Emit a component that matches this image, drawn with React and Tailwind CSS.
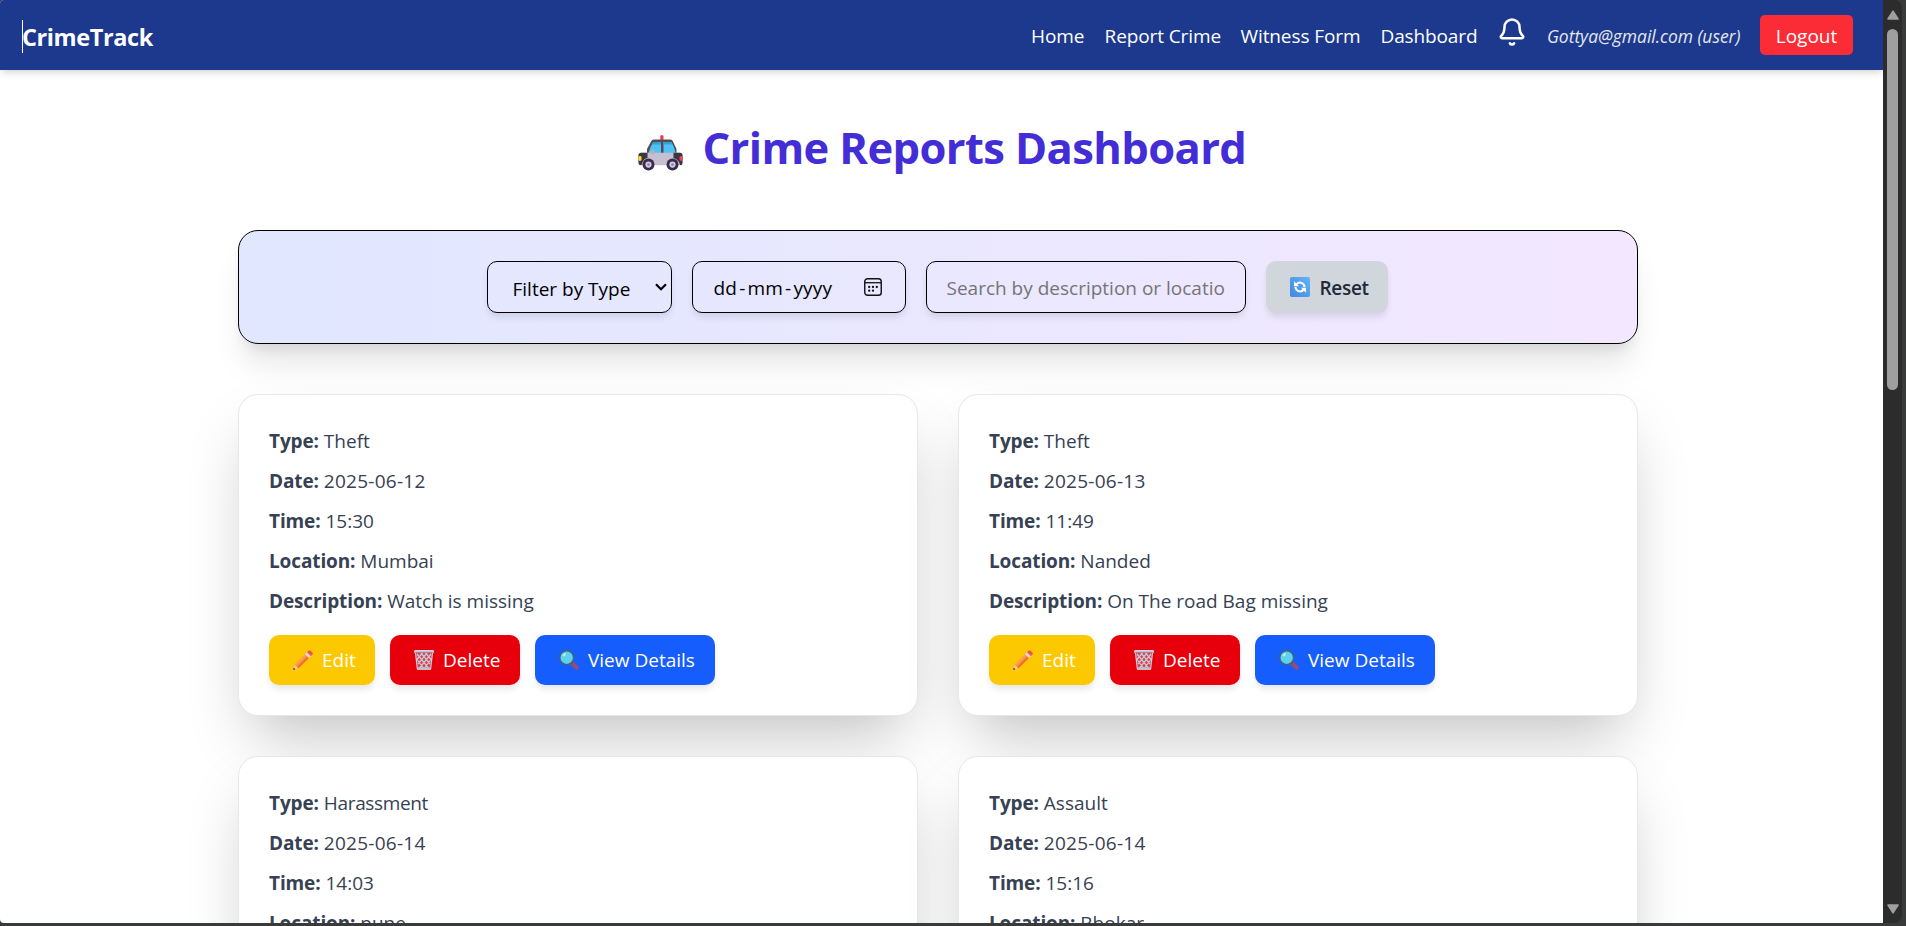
import React from "react";
import { Bell } from "lucide-react";

const reports = [
  { type: "Theft", date: "2025-06-12", time: "15:30", location: "Mumbai", description: "Watch is missing" },
  { type: "Theft", date: "2025-06-13", time: "11:49", location: "Nanded", description: "On The road Bag missing" },
  { type: "Harassment", date: "2025-06-14", time: "14:03", location: "pune", description: "Harassment at station" },
  { type: "Assault", date: "2025-06-14", time: "15:16", location: "Bhokar", description: "Assault near market" },
];

function PoliceCar() {
  return (
    <svg viewBox="0 0 45 36" className="mt-[5px] h-[36px] w-[45px] shrink-0" aria-hidden="true">
      <rect x="22.300" y="0" width="3.200" height="5.500" rx="1.600" fill="#f8314f" />
      <path d="M15.500 4.500h17q1.500 0 2.200 1.500L38.500 14V19H9V14L13.300 6q.7-1.500 2.200-1.500Z" fill="#504f56" />
      <path d="M15.300 7h7.700V18H10.500Q12 12 15.300 7Z" fill="#4fc3f5" />
      <path d="M25.500 7h7.800q3.200 5 4.400 11H25.500Z" fill="#4fc3f5" />
      <path d="M15.300 7h7.700v2.500h-9ZM25.500 7h7.800l1.300 2.500h-9.100Z" fill="#3a9fcf" />
      <path d="M3 17.800h39q2.500 0 2.500 2.500v7.500q0 2.500-2.500 2.500H3Q.5 30.300.5 27.800V20.300q0-2.500 2.500-2.500Z" fill="#c5bfd0" />
      <path d="M9.500 17.800V23q-5 1-6 7.300Q.5 30.300.5 27.800V20.300q0-2.500 2.500-2.500ZM35.500 17.800H42q2.500 0 2.500 2.500v7.500q0 2.500-2.500 2.500-1-6-6.500-7.300Z" fill="#3a3740" />
      <rect x=".5" y="21" width="3" height="5" rx="1.400" fill="#fdd835" />
      <rect x="41.500" y="21" width="3" height="5" rx="1.400" fill="#f83b5a" />
      <rect x="12.800" y="14.500" width="3.800" height="4.800" rx="1.700" fill="#b5aec0" />
      <circle cx="10.500" cy="29.600" r="6" fill="#3b2b4f" />
      <circle cx="10.500" cy="29.600" r="3.100" fill="#d2cbe0" />
      <circle cx="10.500" cy="29.600" r="1.300" fill="#8d82a0" />
      <circle cx="34.500" cy="29.600" r="6" fill="#3b2b4f" />
      <circle cx="34.500" cy="29.600" r="3.100" fill="#d2cbe0" />
      <circle cx="34.500" cy="29.600" r="1.300" fill="#8d82a0" />
    </svg>
  );
}

function RefreshIcon() {
  return (
    <svg viewBox="0 0 20 20" className="h-5 w-5 shrink-0" aria-hidden="true">
      <defs>
        <linearGradient id="refresh-bg" x1="1" y1="0" x2="0" y2="1">
          <stop offset="0" stopColor="#62b4fb" />
          <stop offset="1" stopColor="#3f86e0" />
        </linearGradient>
      </defs>
      <rect width="20" height="20" rx="1.800" fill="url(#refresh-bg)" />
      <g fill="none" stroke="#fff" strokeWidth="2">
        <path d="M6 7.800Q8.500 4.300 12 6.200 14.500 7.500 14.500 10" />
        <path d="M14 12.200Q11.500 15.700 8 13.800 5.500 12.500 5.500 10" />
      </g>
      <path d="M4 4.200V9.200H9ZM16 15.800V10.800H11Z" fill="#fff" />
    </svg>
  );
}

function PencilIcon() {
  return (
    <svg viewBox="0 0 20 20" className="h-5 w-5 shrink-0" aria-hidden="true">
      <path d="M0 20 1.700 14.500 5.500 18.300Z" fill="#f3c7a2" />
      <path d="M0 20 .8 17.500 2.500 19.200Z" fill="#503b5c" />
      <path d="M1.700 14.500 12 4.200 15.800 8 5.500 18.300Z" fill="#ff8b3d" />
      <path d="M1.700 14.500 12 4.200 13.300 5.500 3 15.800Z" fill="#ffa24f" />
      <path d="M4.300 17.100 14.600 6.800 15.800 8 5.500 18.300Z" fill="#ee6a34" />
      <path d="M12 4.200 14 2.200 17.800 6 15.800 8Z" fill="#ded5ee" />
      <path d="M14 2.200 15.500.7Q16.500-.2 17.600.7L19.300 2.400Q20.300 3.500 19.300 4.500L17.800 6Z" fill="#f4504e" />
    </svg>
  );
}

function TrashIcon() {
  return (
    <svg viewBox="0 0 20 20" className="h-5 w-5 shrink-0" aria-hidden="true">
      <path d="M1.200 2.500H18.800L16.800 18H3.200Z" fill="#b5a9bd" fillOpacity=".4" />
      <g fill="none" stroke="#cfc8d6" strokeWidth="1.200">
        <path d="M1.500 3 3.300 18.500M18.500 3 16.700 18.500M3 4 14.500 18M7 3 16 14M11.500 3 17.500 10M2.500 9 9.500 18M17 4 5.500 18M13 3 4 14M8.500 3 2.500 10M17.500 9 10.500 18" />
      </g>
      <rect x="0" y="0" width="20" height="3" rx="1.200" fill="#d5cedc" />
      <rect x="1.500" y="1.800" width="17" height="1.200" fill="#998da5" />
      <rect x="2.800" y="17.200" width="14.400" height="2.800" rx="1" fill="#c4bccb" />
    </svg>
  );
}

function MagnifierIcon() {
  return (
    <svg viewBox="0 0 20 20" className="h-5 w-5 shrink-0" aria-hidden="true">
      <path d="M13 13 17.700 17.700" stroke="#9c4a70" strokeWidth="4" strokeLinecap="round" />
      <path d="M11.500 11.500 13.500 13.500" stroke="#5c5470" strokeWidth="2.400" />
      <circle cx="7.700" cy="7.700" r="6.900" fill="#5fd0ee" stroke="#41657f" strokeWidth="1.400" />
      <ellipse cx="5.300" cy="4.800" rx="2" ry="1.200" transform="rotate(-40 5.300 4.800)" fill="#b4eefa" />
    </svg>
  );
}

function CalendarIcon() {
  return (
    <svg viewBox="0 0 18 18" className="h-[18px] w-[18px] shrink-0" aria-hidden="true">
      <rect x=".75" y=".75" width="16.500" height="16.500" rx="2.800" fill="none" stroke="#111" strokeWidth="1.400" />
      <path d="M1 4.700H17" stroke="#111" strokeWidth="1.300" />
      <g fill="#111">
        <circle cx="5.200" cy="9" r="1.150" />
        <circle cx="9" cy="9" r="1.150" />
        <circle cx="12.800" cy="9" r="1.150" />
        <circle cx="5.200" cy="12.700" r="1.150" />
        <circle cx="9" cy="12.700" r="1.150" />
      </g>
    </svg>
  );
}

function Navbar() {
  return (
    <nav className="relative flex h-[70px] shrink-0 items-center bg-[#1c398e] pr-[30px] pl-[22px] text-[19px] text-white shadow-[0_5px_7.5px_-1.25px_rgba(0,0,0,0.1),0_2.5px_5px_-2.5px_rgba(0,0,0,0.1)]">
      <div className="relative mt-[4px] text-[23.5px] leading-[33px] font-bold tracking-[-0.4px]">
        <span className="absolute top-[-1px] left-0 h-[33px] w-px bg-white" />
        CrimeTrack
      </div>
      <div className="ml-auto flex items-center whitespace-nowrap">
        <a className="mt-[2px] w-[73.5px] tracking-[-0.1px]">Home</a>
        <a className="mt-[2px] w-[136px] tracking-[-0.1px]">Report Crime</a>
        <a className="mt-[2px] w-[140px] tracking-[-0.1px]">Witness Form</a>
        <a className="mt-[2px] w-[116.5px] tracking-[-0.13px]">Dashboard</a>
        <Bell className="mt-[-7px] h-[30px] w-[30px]" strokeWidth={2} />
        <span className="mt-[3px] ml-[20px] w-[213px] text-[17.5px] tracking-[-0.04px] text-gray-200 italic">Gottya@gmail.com (user)</span>
        <button className="h-10 w-[93px] rounded-[5px] bg-[#fb2c36] pt-[2px]">Logout</button>
      </div>
    </nav>
  );
}

function Filters() {
  return (
    <section className="flex h-[114px] w-[1400px] items-center justify-center gap-5 rounded-[20px] border border-black bg-linear-to-r from-indigo-100 to-purple-100 pr-[2px] text-[19px] whitespace-nowrap shadow-[0_25px_31px_-6px_rgba(0,0,0,0.1),0_10px_12.5px_-7.5px_rgba(0,0,0,0.1)]">
      <div className="flex h-[52px] w-[185px] items-center justify-between rounded-[10px] border border-black pr-[4px] pl-[25px] shadow-[0_5px_7.5px_-1px_rgba(0,0,0,0.1)]">
        <span className="mt-[4px]">Filter by Type</span>
        <svg viewBox="0 0 12 8" className="h-2 w-3" fill="none" stroke="#000" strokeWidth="2.200">
          <path d="M1 1.200 6 6.300 11 1.200" />
        </svg>
      </div>
      <div className="flex h-[52px] w-[214px] items-center justify-between rounded-[10px] border border-black pr-[23px] pl-[21px] shadow-[0_5px_7.5px_-1px_rgba(0,0,0,0.1)]">
        <span className="mt-[3px] tracking-[0.2px]">
          dd<span className="mx-[2px]">-</span>mm<span className="mx-[2px]">-</span>yyyy
        </span>
        <CalendarIcon />
      </div>
      <div className="flex h-[52px] w-[320px] items-center rounded-[10px] border border-black px-5 text-[#757575] shadow-[0_5px_7.5px_-1px_rgba(0,0,0,0.1)]">
        <span className="mt-[3px]">Search by description or locatio</span>
      </div>
      <button className="flex h-[52px] w-[122px] items-center rounded-[10px] bg-gray-300 pl-[24px] font-semibold text-gray-800 shadow-[0_5px_7.5px_-1px_rgba(0,0,0,0.1)]">
        <RefreshIcon />
        <span className="mt-[2px] ml-[10px] tracking-[-0.3px]">Reset</span>
      </button>
    </section>
  );
}

function Row({ label, value, tracking = "" }) {
  return (
    <p className="h-[30px] pt-px leading-[30px]">
      <strong className="font-bold tracking-[-0.12px]">{label}:</strong> <span className={tracking}>{value}</span>
    </p>
  );
}

function ReportCard({ report }) {
  const button = "flex h-[50px] items-center rounded-[10px] pl-[24px] gap-[9px] shadow-[0_5px_7.5px_-1px_rgba(0,0,0,0.1)]";
  return (
    <article className="flex h-[322px] w-[680px] flex-col rounded-[20px] border border-gray-200 bg-white p-[30px] text-[19px] whitespace-nowrap text-gray-700 shadow-[0_31px_62px_-15px_rgba(0,0,0,0.25)]">
      <div className="flex flex-col gap-[10px]">
        <Row label="Type" value={report.type} tracking={report.type === "Harassment" ? "tracking-[-0.35px]" : ""} />
        <Row label="Date" value={report.date} tracking="tracking-[0.27px]" />
        <Row label="Time" value={report.time} />
        <Row label="Location" value={report.location} />
        <Row label="Description" value={report.description} />
      </div>
      <div className="mt-5 flex gap-[15px] text-white">
        <button className={`${button} w-[106px] bg-[#fcc800]`}>
          <PencilIcon />
          <span className="mt-[1px]">Edit</span>
        </button>
        <button className={`${button} w-[130px] bg-[#e7000b]`}>
          <TrashIcon />
          <span className="mt-[1px]">Delete</span>
        </button>
        <button className={`${button} w-[180px] bg-[#155dfc]`}>
          <MagnifierIcon />
          <span className="mt-[1px]">View Details</span>
        </button>
      </div>
    </article>
  );
}

function Scrollbar() {
  return (
    <div className="flex h-[923px] w-[19px] shrink-0 flex-col items-center rounded-r-[8px] bg-[#2c2c2c]">
      <svg viewBox="0 0 12 10" className="mt-[10px] h-[10px] w-3 shrink-0">
        <path d="M6 1.200 11 9H1Z" fill="#9f9f9f" stroke="#9f9f9f" strokeWidth="1.600" strokeLinejoin="round" />
      </svg>
      <div className="mt-[9px] h-[361px] w-[11px] shrink-0 rounded-full bg-[#9f9f9f]" />
      <svg viewBox="0 0 12 10" className="mt-auto mb-[9px] h-[10px] w-3 shrink-0">
        <path d="M6 8.800 11 1H1Z" fill="#9f9f9f" stroke="#9f9f9f" strokeWidth="1.600" strokeLinejoin="round" />
      </svg>
    </div>
  );
}

export default function App() {
  return (
    <div className="flex h-[926px] w-[1906px] overflow-hidden bg-[#393a3a] font-['Open_Sans','Noto_Sans',sans-serif]">
      <div className="flex h-[923px] w-[1883px] shrink-0 flex-col overflow-hidden rounded-l-[4px] bg-white">
        <Navbar />
        <main className="flex flex-col pl-[238px]">
          <h1 className="mt-[50px] flex h-[60px] w-[1406px] items-center justify-center text-[43.5px] leading-[60px] font-bold whitespace-nowrap text-indigo-700">
            <PoliceCar />
            <span className="mt-[-4px] ml-[20px] w-[542px] tracking-[-0.6px]">Crime Reports Dashboard</span>
          </h1>
          <div className="mt-[50px]">
            <Filters />
          </div>
          <div className="mt-[50px] grid w-[1400px] grid-cols-2 gap-10">
            {reports.map((report, i) => (
              <ReportCard key={i} report={report} />
            ))}
          </div>
        </main>
      </div>
      <Scrollbar />
    </div>
  );
}
